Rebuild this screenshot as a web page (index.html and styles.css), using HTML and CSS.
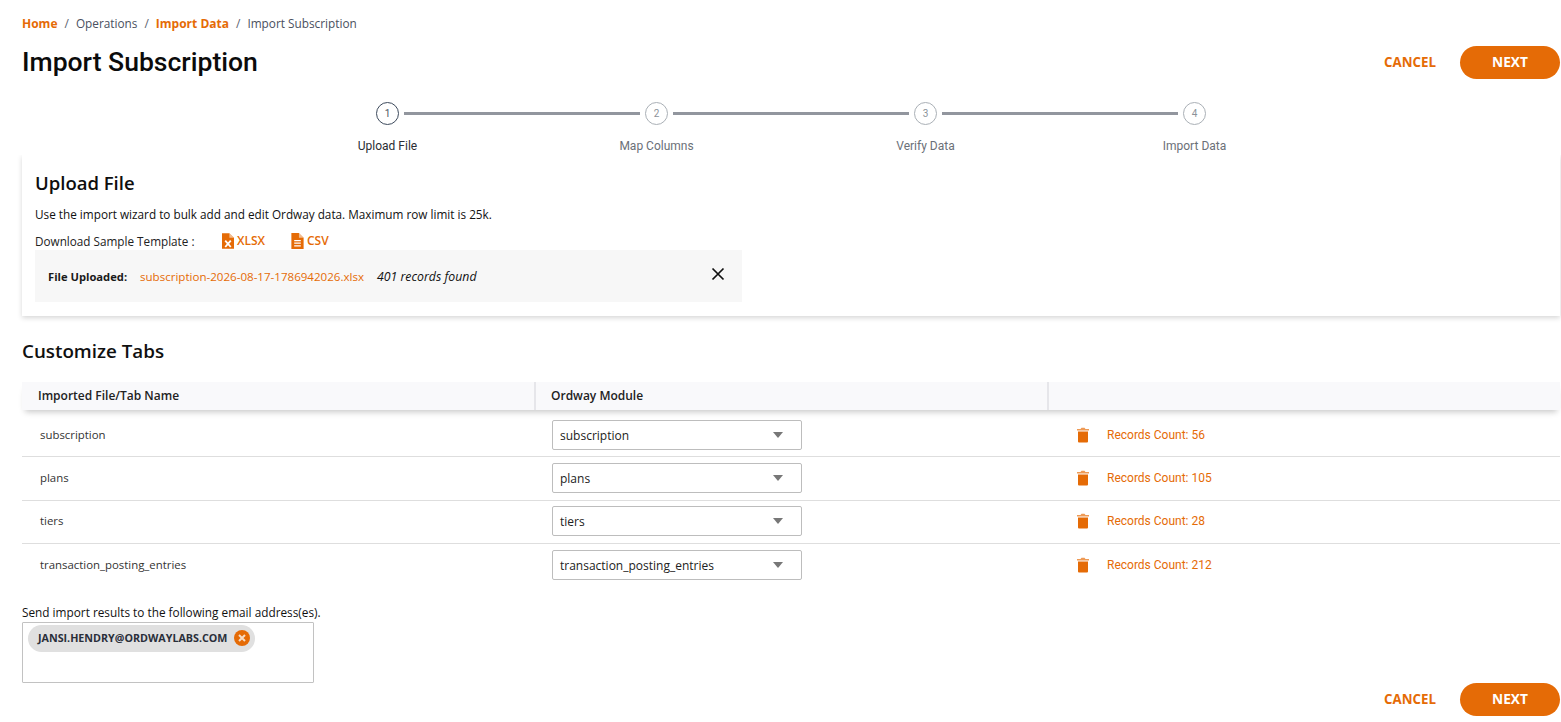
FILE: index.html
```html
<!DOCTYPE html>
<html lang="en">
<head>
<meta charset="utf-8">
<title>Import Subscription</title>
<link rel="stylesheet" href="styles.css">
</head>
<body>
<main class="page">
  <nav class="crumbs">
    <a class="crumb-link">Home</a><span class="sep">/</span>
    <span class="crumb">Operations</span><span class="sep">/</span>
    <a class="crumb-link">Import Data</a><span class="sep">/</span>
    <span class="crumb">Import Subscription</span>
  </nav>
  <header class="title-row">
    <h1 class="title">Import Subscription</h1>
    <div class="actions">
      <button class="btn-text">CANCEL</button>
      <button class="btn-primary">NEXT</button>
    </div>
  </header>
  <ol class="stepper">
    <li class="step active"><span class="dot">1</span><span class="step-label">Upload File</span></li>
    <li class="step"><span class="dot">2</span><span class="step-label">Map Columns</span></li>
    <li class="step"><span class="dot">3</span><span class="step-label">Verify Data</span></li>
    <li class="step last"><span class="dot">4</span><span class="step-label">Import Data</span></li>
  </ol>
  <section class="card">
    <h2 class="card-title">Upload File</h2>
    <p class="intro">Use the import wizard to bulk add and edit Ordway data. Maximum row limit is 25k.</p>
    <div class="template">
      <span class="template-label">Download Sample Template :</span>
      <a class="file-link xlsx">
        <svg class="file-icon" viewBox="0 0 13 17"><path fill="#e56b06" d="M0 0h8l5 5v12H0z"/><path fill="#fff" d="M8 0v5h5z" opacity=".55"/><path fill="none" stroke="#fff" stroke-width="2" d="M3.500 8l6 7M9.500 8l-6 7"/></svg>XLSX</a>
      <a class="file-link csv">
        <svg class="file-icon" viewBox="0 0 13 17"><path fill="#e56b06" d="M0 0h8l5 5v12H0z"/><path fill="#fff" d="M8 0v5h5z" opacity=".55"/><path fill="none" stroke="#fff" stroke-width="1.300" d="M3 8h7M3 10.800h7M3 13.600h7"/></svg>CSV</a>
    </div>
    <div class="uploaded">
      <strong class="uploaded-label">File Uploaded:</strong>
      <a class="uploaded-file">subscription-2026-08-17-1786942026.xlsx</a>
      <em class="uploaded-count">401 records found</em>
      <svg class="close" viewBox="0 0 14 14"><path fill="none" stroke="#111" stroke-width="1.700" d="M1.500 1.500l11 11M12.500 1.500l-11 11"/></svg>
    </div>
  </section>
  <h2 class="section-title">Customize Tabs</h2>
  <div class="table">
    <div class="thead">
      <div class="th">Imported File/Tab Name</div>
      <div class="th">Ordway Module</div>
      <div class="th"></div>
    </div>
    <div class="row">
      <div class="name">subscription</div>
      <div class="cell"><div class="select">subscription<i class="caret"></i></div></div>
      <div class="count"><svg class="trash" viewBox="0 0 12 16"><path fill="#e56b06" d="M1 4.500h10V14.500a1 1 0 0 1-1 1H2a1 1 0 0 1-1-1z"/><path fill="#ee9a55" d="M0 2h3.500L4.500.800h3L8.500 2H12v1.400H0z"/></svg><span>Records Count: 56</span></div>
    </div>
    <div class="row">
      <div class="name">plans</div>
      <div class="cell"><div class="select">plans<i class="caret"></i></div></div>
      <div class="count"><svg class="trash" viewBox="0 0 12 16"><path fill="#e56b06" d="M1 4.500h10V14.500a1 1 0 0 1-1 1H2a1 1 0 0 1-1-1z"/><path fill="#ee9a55" d="M0 2h3.500L4.500.800h3L8.500 2H12v1.400H0z"/></svg><span>Records Count: 105</span></div>
    </div>
    <div class="row">
      <div class="name">tiers</div>
      <div class="cell"><div class="select">tiers<i class="caret"></i></div></div>
      <div class="count"><svg class="trash" viewBox="0 0 12 16"><path fill="#e56b06" d="M1 4.500h10V14.500a1 1 0 0 1-1 1H2a1 1 0 0 1-1-1z"/><path fill="#ee9a55" d="M0 2h3.500L4.500.800h3L8.500 2H12v1.400H0z"/></svg><span>Records Count: 28</span></div>
    </div>
    <div class="row no-border">
      <div class="name">transaction_posting_entries</div>
      <div class="cell"><div class="select">transaction_posting_entries<i class="caret"></i></div></div>
      <div class="count"><svg class="trash" viewBox="0 0 12 16"><path fill="#e56b06" d="M1 4.500h10V14.500a1 1 0 0 1-1 1H2a1 1 0 0 1-1-1z"/><path fill="#ee9a55" d="M0 2h3.500L4.500.800h3L8.500 2H12v1.400H0z"/></svg><span>Records Count: 212</span></div>
    </div>
  </div>
  <p class="email-label">Send import results to the following email address(es).</p>
  <div class="email-box">
    <span class="chip">JANSI.HENDRY@ORDWAYLABS.COM<svg class="chip-x" viewBox="0 0 16 16"><circle cx="8" cy="8" r="8" fill="#e56b06"/><path fill="none" stroke="#f6dcc5" stroke-width="2" d="M5 5l6 6M11 5l-6 6"/></svg></span>
  </div>
  <footer class="actions bottom">
    <button class="btn-text">CANCEL</button>
    <button class="btn-primary">NEXT</button>
  </footer>
</main>
</body>
</html>
```
FILE: styles.css
```css
* { box-sizing: border-box; }
html, body { margin: 0; height: 100%; overflow: hidden; background: #fff; }
body { font-family: "Open Sans", "Liberation Sans", sans-serif; color: #111; }
.page { padding: 16px 1px 0 22px; }

.crumbs { display: flex; align-items: center; height: 16px; font-size: 12px; line-height: 16px; }
.crumb-link { color: #e56b06; font-weight: 700; }
.crumb { color: #4a5060; font-size: 11.800px; line-height: 15px; padding-bottom: 1px; }
.sep { color: #5d6370; margin: 0 7px; }

.title-row { display: flex; justify-content: space-between; align-items: center; margin-top: 13px; height: 34px; }
.title { margin: 0 0 1px; font: 500 26.550px/32px Roboto, sans-serif; color: #0b0b0b; }
.actions { display: flex; align-items: center; }
.btn-text { border: 0; background: none; padding: 0; margin-right: 24px; font: 700 13.300px/20px "Open Sans", sans-serif; color: #e56b06; }
.btn-primary { border: 0; width: 100px; height: 33px; border-radius: 17px; background: #e56b06; color: #fff; font: 700 13.700px/20px "Open Sans", sans-serif; }

.stepper { list-style: none; display: flex; margin: 23px 0 0 313px; padding: 0; height: 54px; }
.step { position: relative; width: 269px; height: 54px; flex: none; }
.step::after { content: ""; position: absolute; left: 69px; top: 10px; width: 236px; height: 3px; background: #92969e; }
.step.last::after { display: none; }
.dot { position: absolute; left: 41px; top: 0; width: 23px; height: 23px; border: 1px solid #aab0b6; border-radius: 50%; text-align: center; font: 400 10px/21px Roboto, sans-serif; color: #8b9299; }
.active .dot { border-color: #3d4a5c; color: #4c5562; }
.step-label { position: absolute; left: 0; top: 36px; width: 105px; text-align: center; font: 400 12px/16px Roboto, sans-serif; color: #6b7078; }
.active .step-label { color: #2a2d33; }

.card { height: 161px; margin-top: -1px; padding: 16px 13px 0; box-shadow: 0 2px 5px rgba(0,0,0,.16); background: #fff; clip-path: inset(0 -8px -8px -8px); }
.card-title { margin: 0; font: 600 18.500px/24px "Open Sans", sans-serif; color: #0e0e0e; }
.intro { margin: 11px 0 0; font-size: 11.750px; line-height: 16px; color: #111; }
.template { display: flex; align-items: center; height: 19px; margin-top: 9px; font-size: 11.730px; }
.template-label { width: 187px; color: #222; }
.file-link { display: flex; align-items: center; color: #e56b06; font-weight: 600; font-size: 12px; }
.file-link.xlsx { width: 69px; }
.file-icon { width: 12px; height: 16px; margin-right: 3px; flex: none; }
.csv .file-icon { width: 13px; }
.uploaded { display: flex; align-items: center; width: 707px; height: 52px; padding: 0 17px 0 13px; background: #f7f7f7; font-size: 11.570px; }
.uploaded-label { width: 92px; font-size: 11.200px; font-weight: 700; color: #1a1a1a; }
.uploaded-file { width: 237px; color: #e56b06; }
.uploaded-count { flex: 1; font-size: 12.300px; color: #111; }
.close { width: 14px; height: 14px; margin-top: -5px; }

.section-title { margin: 23px 0 0; font: 600 18.800px/24px "Open Sans", sans-serif; color: #101010; }

.table { margin-top: 19px; }
.thead { display: grid; grid-template-columns: 514px 513px 511px; height: 28px; background: #f9f9fb; box-shadow: 0 5px 6px -3px rgba(0,0,0,.22); position: relative; }
.th { padding-left: 16px; border-right: 2px solid #e6e6ea; font-weight: 600; font-size: 12px; line-height: 27px; color: #222; }
.th:nth-child(2) { padding-left: 15px; }
.th:last-child { border-right: 0; }
.row { display: grid; grid-template-columns: 514px 513px 511px; align-items: center; height: 43.500px; border-bottom: 1px solid #dedede; }
.row:nth-child(2) { height: 47px; padding-top: 4px; }
.row:nth-child(n+4) { padding-bottom: 1px; }
.row.no-border { border-bottom: 0; }
.name { padding: 0 0 2px 18px; font-size: 11.400px; color: #333; }
.cell { padding-left: 16px; }
.select { position: relative; display: flex; align-items: center; width: 250px; height: 30px; padding-left: 7px; border: 1px solid #bdbdbd; border-radius: 2px; font-size: 12px; color: #222; }
.caret { position: absolute; right: 18px; top: 11px; width: 0; height: 0; border-left: 5.500px solid transparent; border-right: 5.500px solid transparent; border-top: 6px solid #777; }
.count { display: flex; align-items: center; padding-left: 28px; font: 400 12px/16px Roboto, sans-serif; color: #e56b06; }
.trash { width: 12px; height: 16px; margin-right: 18px; }

.email-label { margin: 16px 0 2px; font-size: 11.800px; line-height: 16px; color: #111; }
.email-box { width: 292px; height: 61px; padding: 2px 5px; border: 1px solid #c2c2c2; border-radius: 1px; }
.chip { display: inline-flex; align-items: center; height: 27px; padding: 0 5px 0 10px; border-radius: 14px; background: #e0e0e0; font-weight: 700; font-size: 10.730px; color: #2a2f3a; }
.chip-x { width: 16px; height: 16px; margin-left: 7px; }

.bottom { justify-content: flex-end; margin-top: 0; }
```
